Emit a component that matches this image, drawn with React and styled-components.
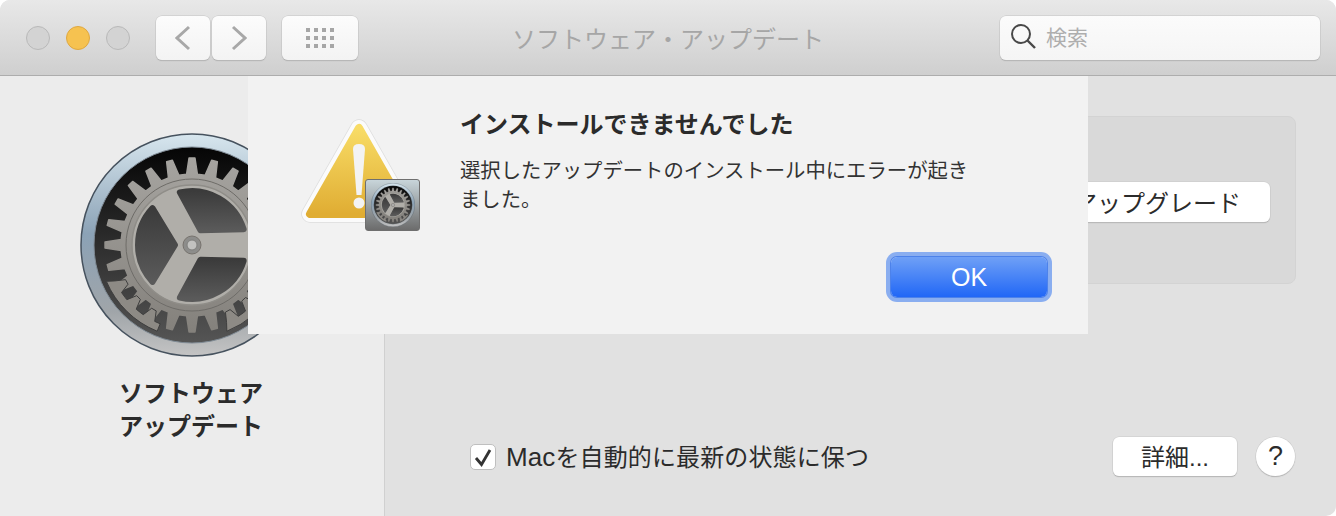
import React from 'react'
import styled, { createGlobalStyle } from 'styled-components'

const FONT = '"Liberation Sans", "Noto Sans CJK JP", sans-serif'

const GlobalStyle = createGlobalStyle`
    html, body {
        margin: 0;
        background: #fff;
        font-family: ${FONT};
    }
`

const Window = styled.div`
    position: relative;
    width: 1336px;
    height: 516px;
    overflow: hidden;
    border-radius: 10px 10px 10px 0;
    display: flex;
    flex-direction: column;
    background: #e1e1e1;
`

/* TOOLBAR */
const Toolbar = styled.div`
    height: 75px;
    flex: none;
    display: flex;
    align-items: center;
    padding: 0 16px 0 26px;
    background: linear-gradient(#e8e8e8, #cfcfcf);
    border-bottom: 1px solid #adadad;
`
const Lights = styled.div`
    display: flex;
    gap: 16px;
    margin-right: 26px;
`
const Light = styled.span`
    width: 24px;
    height: 24px;
    box-sizing: border-box;
    border-radius: 50%;
    background: ${p => p.$on ? '#f6c250' : '#d3d3d3'};
    border: 1px solid ${p => p.$on ? '#dfa841' : '#b9b9b9'};
`
const ToolButton = styled.div`
    width: ${p => p.$w}px;
    height: 44px;
    margin-right: ${p => p.$gap}px;
    box-sizing: border-box;
    display: flex;
    align-items: center;
    justify-content: center;
    background: linear-gradient(#fcfcfc, #f3f3f3);
    border-radius: 6px;
    box-shadow: 0 0 0 0.5px #c4c4c4, 0 1px 1px #a6a6a6;
`
const DotGrid = styled.div`
    display: grid;
    grid-template-columns: repeat(4, 4px);
    grid-auto-rows: 4px;
    gap: 4px;
    span { background: #a6a6a6; }
`
const WindowTitle = styled.div`
    flex: 1;
    text-align: center;
    padding-right: 22px;
    font-size: 24px;
    color: #a6a6a6;
    white-space: nowrap;
`
const Search = styled.div`
    width: 320px;
    height: 44px;
    box-sizing: border-box;
    display: flex;
    align-items: center;
    gap: 9px;
    padding: 0 0 3px 11px;
    background: linear-gradient(#fbfbfb, #f5f5f5);
    border-radius: 6px;
    box-shadow: 0 0 0 0.5px #c4c4c4, 0 1px 1px #a6a6a6;
    font-size: 21px;
    color: #aeaeae;
`

/* BODY */
const Body = styled.div`
    flex: 1;
    display: flex;
    min-height: 0;
`
const Sidebar = styled.div`
    width: 384px;
    flex: none;
    box-sizing: content-box;
    display: flex;
    flex-direction: column;
    align-items: center;
    padding-top: 57px;
    background: #ececec;
    border-right: 1px solid #d0d0d0;
`
const SideLabel = styled.div`
    margin: 20px 2px 0 0;
    width: 144px;
    font-size: 24px;
    line-height: 33px;
    font-weight: 700;
    color: #2b2b2b;
`
const Main = styled.div`
    flex: 1;
    display: flex;
    flex-direction: column;
    padding: 40px 40px 40px 41px;
`
const Panel = styled.div`
    height: 168px;
    box-sizing: border-box;
    display: flex;
    align-items: center;
    justify-content: flex-end;
    padding: 4px 25px 0 0;
    background: #d9d9d9;
    border: 1px solid #d3d3d3;
    border-radius: 8px;
`
const PushButton = styled.div`
    height: ${p => p.$h || 39}px;
    width: ${p => p.$w ? p.$w + 'px' : 'auto'};
    box-sizing: border-box;
    padding: ${p => p.$w ? '0 0 2px' : '0 29px 2px'};
    display: flex;
    align-items: center;
    justify-content: center;
    background: #fff;
    border-radius: 6px;
    box-shadow: 0 0 0 0.5px #c9c9c9, 0 1px 1px #a3a3a3;
    font-size: 24px;
    color: #2b2b2b;
    white-space: nowrap;
`
const Footer = styled.div`
    margin-top: auto;
    display: flex;
    align-items: center;
    padding: 0 1px 0 44px;
`
const CheckBox = styled.div`
    width: 26px;
    height: 26px;
    box-sizing: border-box;
    margin-right: 10px;
    display: flex;
    align-items: center;
    justify-content: center;
    background: #fff;
    border: 1px solid #bfbfbf;
    border-radius: 5px;
`
const CheckLabel = styled.div`
    flex: 1;
    padding-bottom: 2px;
    font-size: 24px;
    letter-spacing: 0.12px;
    color: #2b2b2b;
    white-space: nowrap;
`
const Latin = styled.span`
    font-size: 26px;
`
const HelpButton = styled.div`
    width: 39px;
    height: 39px;
    margin-left: 19px;
    display: flex;
    align-items: center;
    justify-content: center;
    background: #fff;
    border-radius: 50%;
    box-shadow: 0 0 0 0.5px #c9c9c9, 0 1px 1px #a3a3a3;
    font-size: 27px;
    color: #2b2b2b;
`

/* ALERT */
const Dialog = styled.div`
    position: absolute;
    top: 76px;
    left: 248px;
    width: 840px;
    height: 258px;
    box-sizing: border-box;
    display: flex;
    padding: 0 41px 37px 53px;
    background: #f2f2f2;
`
const AlertIcon = styled.div`
    position: relative;
    width: 119px;
    height: 112px;
    flex: none;
    margin: 43px 40px 0 0;
`
const Badge = styled.div`
    position: absolute;
    right: 0;
    bottom: 0;
    width: 55px;
    height: 52px;
    box-sizing: border-box;
    display: flex;
    align-items: center;
    justify-content: center;
    background: linear-gradient(#c8d5da, #6c6c6c);
    border: 1px solid #6f6f6f;
    border-radius: 3px;
`
const AlertText = styled.div`
    flex: 1;
    display: flex;
    flex-direction: column;
    padding-top: 32px;
`
const AlertTitle = styled.div`
    font-size: 24px;
    line-height: 34px;
    font-weight: 700;
    color: #2b2b2b;
`
const AlertBody = styled.div`
    width: 512px;
    margin-top: 15px;
    font-size: 20.35px;
    line-height: 29px;
    color: #333;
`
const Actions = styled.div`
    margin-top: auto;
    display: flex;
    justify-content: flex-end;
`
const OkButton = styled.div`
    width: 156px;
    height: 40px;
    display: flex;
    align-items: center;
    justify-content: center;
    background: linear-gradient(#6fa0f6, #2167f6);
    border-radius: 6px;
    box-shadow: 0 0 0 1px #4d82ea, 0 0 0 5px #8aaef0;
    font-size: 25px;
    color: #fff;
`

const rad = (v) => (v * Math.PI) / 180
const pt = (r, v) => `${(r * Math.cos(rad(v))).toFixed(2)} ${(r * Math.sin(rad(v))).toFixed(2)}`

// gear outline with trapezoid teeth, centred on 0,0
const gearPath = (count, root, tip) => {
    const pitch = 360 / count
    let d = ''
    for (let i = 0; i < count; i++) {
        const a = i * pitch
        d += `${i ? 'L' : 'M'}${pt(root, a - pitch * 0.29)} L${pt(tip, a - pitch * 0.13)} L${pt(tip, a + pitch * 0.13)} L${pt(root, a + pitch * 0.29)} `
    }
    return d + 'Z'
}

// one window of the gear between the spokes
const holePath = (deg) => `M${pt(17, deg)} L${pt(54, deg - 43)} A54 54 0 0 1 ${pt(54, deg + 43)} Z`

// band of the other gear along the lower edge, teeth pointing inward
const backGearPath = (from, to, outer, inner) => {
    const step = 15
    let d = `M${pt(outer, from)} A${outer} ${outer} 0 0 1 ${pt(outer, to)} `
    for (let a = to; a >= from + step - 0.1; a -= step) {
        d += `L${pt(inner, a - 2)} L${pt(inner - 10, a - 4.5)} L${pt(inner - 10, a - 8.5)} L${pt(inner, a - 11)} L${pt(inner, a - step)} `
    }
    return d + 'Z'
}

const GearIcon = ({ size, id }) => (
    <svg width={size} height={size} viewBox="-112 -112 224 224" style={{ display: 'block', flex: 'none' }}>
        <defs>
            <linearGradient id={id + 'ring'} x1="0" y1="0" x2="0" y2="1">
                <stop offset="0" stopColor="#d7e6ee" />
                <stop offset="0.45" stopColor="#8ba2b6" />
                <stop offset="0.8" stopColor="#a0a5a9" />
                <stop offset="1" stopColor="#c4c4c4" />
            </linearGradient>
            <linearGradient id={id + 'well'} x1="0" y1="0" x2="0" y2="1">
                <stop offset="0" stopColor="#050505" />
                <stop offset="0.5" stopColor="#2e2e2e" />
                <stop offset="1" stopColor="#555" />
            </linearGradient>
            <linearGradient id={id + 'gear'} x1="0" y1="0" x2="0" y2="1">
                <stop offset="0" stopColor="#a6a4a0" />
                <stop offset="1" stopColor="#84817c" />
            </linearGradient>
            <linearGradient id={id + 'hole'} x1="0" y1="0" x2="0" y2="1">
                <stop offset="0" stopColor="#3b3b3b" />
                <stop offset="1" stopColor="#5a5a5a" />
            </linearGradient>
        </defs>
        <circle r="111" fill={`url(#${id}ring)`} stroke="#46525e" strokeWidth="1.5" />
        <circle r="98" fill={`url(#${id}well)`} stroke="#7f8a94" strokeWidth="1" />
        <path d={gearPath(24, 71, 87)} fill={`url(#${id}gear)`} stroke={`url(#${id}gear)`} strokeWidth="1.5" strokeLinejoin="round" />
        <circle r="66" fill="none" stroke="#6e6c68" strokeWidth="1" />
        <circle r="60" fill="#b0aea9" stroke="#8f8d88" strokeWidth="1.5" />
        <path d={backGearPath(112, 157, 93, 85)} fill="#8d8a85" stroke="#3e3e3e" strokeWidth="1" strokeLinejoin="round" />
        <path d={backGearPath(30, 68, 93, 85)} fill="#8d8a85" stroke="#3e3e3e" strokeWidth="1" strokeLinejoin="round" />
        {[180, 60, -60].map(deg => (
            <path key={deg} d={holePath(deg)} fill={`url(#${id}hole)`} stroke={`url(#${id}hole)`} strokeWidth="6" strokeLinejoin="round" />
        ))}
        <circle r="9" fill="#8d8d8b" stroke="#77736e" strokeWidth="1" />
        <circle r="5" fill="#c2c2c0" stroke="#80807e" strokeWidth="1" />
    </svg>
)

const WarningTriangle = () => (
    <svg width="119" height="112" viewBox="0 0 119 112" style={{ display: 'block' }}>
        <defs>
            <linearGradient id="warnFill" x1="0" y1="0" x2="0" y2="1">
                <stop offset="0" stopColor="#f8dc66" />
                <stop offset="1" stopColor="#e0ad33" />
            </linearGradient>
        </defs>
        <path d="M58 9 L9 95 H107 Z" fill="#cfcfcf" stroke="#cfcfcf" strokeWidth="17.5" strokeLinejoin="round" opacity="0.6" />
        <path d="M58 9 L9 95 H107 Z" fill="#fbfbfb" stroke="#fbfbfb" strokeWidth="16" strokeLinejoin="round" />
        <path d="M58 9 L9 95 H107 Z" fill="url(#warnFill)" stroke="url(#warnFill)" strokeWidth="8" strokeLinejoin="round" />
        <path d="M52 30 Q52 25 58 25 Q64 25 64 30 L60.5 76 H55.5 Z" fill="#f3f3f3" />
        <circle cx="58" cy="84" r="5.5" fill="#f3f3f3" />
    </svg>
)

const App = () => {
    return (
        <Window>
            <GlobalStyle />
            <Toolbar>
                <Lights>
                    <Light />
                    <Light $on />
                    <Light />
                </Lights>
                <ToolButton $w={54} $gap={2}>
                    <svg width="16" height="26" viewBox="0 0 16 26"><path d="M14 2 L2 13 L14 24" fill="none" stroke="#a8a8a8" strokeWidth="3" /></svg>
                </ToolButton>
                <ToolButton $w={54} $gap={16}>
                    <svg width="16" height="26" viewBox="0 0 16 26"><path d="M2 2 L14 13 L2 24" fill="none" stroke="#a8a8a8" strokeWidth="3" /></svg>
                </ToolButton>
                <ToolButton $w={76} $gap={0}>
                    <DotGrid>
                        {Array.from({ length: 12 }, (_, i) => <span key={i} />)}
                    </DotGrid>
                </ToolButton>
                <WindowTitle>ソフトウェア・アップデート</WindowTitle>
                <Search>
                    <svg width="26" height="28" viewBox="0 0 26 28" style={{ flex: 'none' }}>
                        <circle cx="10" cy="12" r="9" fill="none" stroke="#484848" strokeWidth="2" />
                        <path d="M16.5 18.5 L24 26" stroke="#484848" strokeWidth="2.4" />
                    </svg>
                    検索
                </Search>
            </Toolbar>
            <Body>
                <Sidebar>
                    <GearIcon size={224} id="large" />
                    <SideLabel>ソフトウェア アップデート</SideLabel>
                </Sidebar>
                <Main>
                    <Panel>
                        <PushButton $h={40}>アップグレード</PushButton>
                    </Panel>
                    <Footer>
                        <CheckBox>
                            <svg width="18" height="20" viewBox="0 0 18 20"><path d="M2 11 L7.5 17.5 L16 3" fill="none" stroke="#333" strokeWidth="2.8" /></svg>
                        </CheckBox>
                        <CheckLabel><Latin>Mac</Latin>を自動的に最新の状態に保つ</CheckLabel>
                        <PushButton $w={124}>詳細...</PushButton>
                        <HelpButton>?</HelpButton>
                    </Footer>
                </Main>
            </Body>
            <Dialog>
                <AlertIcon>
                    <WarningTriangle />
                    <Badge>
                        <GearIcon size={44} id="small" />
                    </Badge>
                </AlertIcon>
                <AlertText>
                    <AlertTitle>インストールできませんでした</AlertTitle>
                    <AlertBody>選択したアップデートのインストール中にエラーが起きました。</AlertBody>
                    <Actions>
                        <OkButton>OK</OkButton>
                    </Actions>
                </AlertText>
            </Dialog>
        </Window>
    )
}

export default App
